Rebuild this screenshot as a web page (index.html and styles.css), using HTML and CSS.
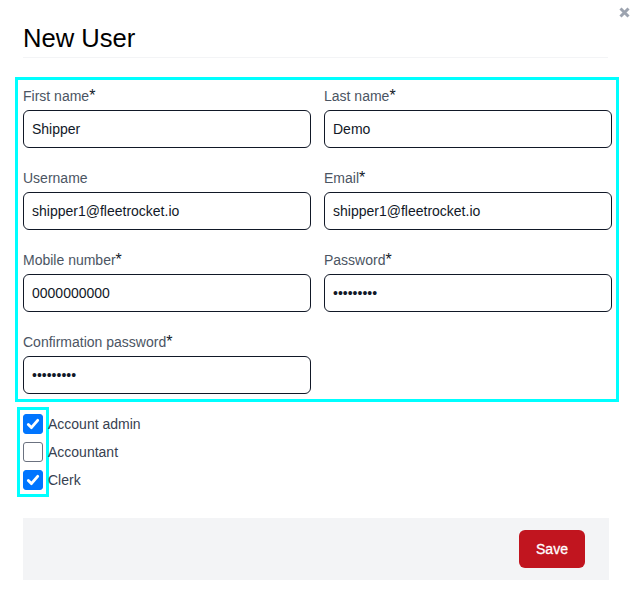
FILE: index.html
```html
<!DOCTYPE html>
<html lang="en">
<head>
<meta charset="utf-8">
<title>New User</title>
<link rel="stylesheet" href="styles.css">
</head>
<body>
<main class="modal">
  <button class="close" type="button" aria-label="Close">
    <svg viewBox="0 0 11 11" width="11" height="11"><path d="M1.5 1.5 9.5 9.5M9.5 1.5 1.5 9.5" /></svg>
  </button>
  <h1 class="title">New User</h1>
  <form class="form">
    <div class="fields">
      <div class="field"><label class="label">First name<span class="req">*</span></label><input class="input" value="Shipper"></div>
      <div class="field"><label class="label">Last name<span class="req">*</span></label><input class="input" value="Demo"></div>
      <div class="field"><label class="label">Username</label><input class="input" value="shipper1@fleetrocket.io"></div>
      <div class="field"><label class="label">Email<span class="req">*</span></label><input class="input" value="shipper1@fleetrocket.io"></div>
      <div class="field"><label class="label">Mobile number<span class="req">*</span></label><input class="input" value="0000000000"></div>
      <div class="field"><label class="label">Password<span class="req">*</span></label><input class="input" type="password" value="123456789"></div>
      <div class="field"><label class="label">Confirmation password<span class="req">*</span></label><input class="input" type="password" value="123456789"></div>
    </div>
    <div class="roles">
      <div class="role-boxes">
        <input class="check" type="checkbox" id="r1" checked>
        <input class="check" type="checkbox" id="r2">
        <input class="check" type="checkbox" id="r3" checked>
      </div>
      <div class="role-labels">
        <label class="role" for="r1">Account admin</label>
        <label class="role" for="r2">Accountant</label>
        <label class="role" for="r3">Clerk</label>
      </div>
    </div>
    <div class="footer"><button class="save" type="button">Save</button></div>
  </form>
</main>
</body>
</html>
```
FILE: styles.css
```css
* { box-sizing: border-box; }
html, body { margin: 0; padding: 0; background: #fff; }
body { width: 636px; height: 591px; overflow: hidden; font-family: "Liberation Sans", Arial, sans-serif; }
.modal { position: relative; padding: 20px 0 0 23px; }
.close { position: absolute; top: 7px; right: 6px; width: 11px; height: 11px; padding: 0; border: 0; background: none; display: flex; }
.close path { stroke: #9ca3af; stroke-width: 3; fill: none; }
.title { margin: 0; width: 585px; height: 38px; font-size: 25.6px; line-height: 36px; font-weight: 400; color: #000; border-bottom: 1px solid #f3f4f6; }
.form { display: flex; flex-direction: column; }
.fields { display: grid; grid-template-columns: 288px 288px; column-gap: 13px; grid-auto-rows: 82px; width: 604px; height: 325px; margin: 19px 0 0 -8px; padding: 5px; border: 3px solid #00ffff; }
.field { display: flex; flex-direction: column; }
.label { height: 25px; font-size: 14px; line-height: 22px; color: #4b5563; white-space: nowrap; }
.req { font-size: 16px; color: #111827; }
.input { width: 288px; height: 38px; padding: 0 8px; border: 1px solid #111827; border-radius: 6px; font: 14px/20px "Liberation Sans", Arial, sans-serif; color: #111827; background: #fff; }
.roles { display: flex; align-items: flex-start; margin-top: 5px; }
.role-boxes { display: flex; flex-direction: column; gap: 8px; width: 32px; height: 90px; margin-left: -6px; padding: 4px 0 0 3px; border: 3px solid #00ffff; }
.check { appearance: none; width: 20px; height: 20px; margin: 0; border: 1px solid #6b7280; border-radius: 3px; background: #fff; }
.check:checked { border-color: #0075ff; background: #0075ff url("data:image/svg+xml,%3Csvg xmlns='http://www.w3.org/2000/svg' viewBox='0 0 20 20'%3E%3Cpath fill='none' stroke='%23fff' stroke-linecap='round' stroke-linejoin='round' stroke-width='3.2' d='M4.8 10.5l3.4 3.5 7-8'/%3E%3C/svg%3E") center/100% no-repeat; }
.role-labels { display: flex; flex-direction: column; margin: 3px 0 0 -1px; }
.role { height: 28px; font-size: 14px; line-height: 28px; color: #374151; }
.footer { display: flex; justify-content: flex-end; width: 586px; height: 62px; margin-top: 21px; padding: 12px 24px; background: #f3f4f6; }
.save { width: 66px; height: 38px; padding: 0; border: 0; border-radius: 6px; background: #c1151f; color: #fff; font: 400 14px/20px "Liberation Sans", Arial, sans-serif; -webkit-text-stroke: 0.3px #fff; }
```
